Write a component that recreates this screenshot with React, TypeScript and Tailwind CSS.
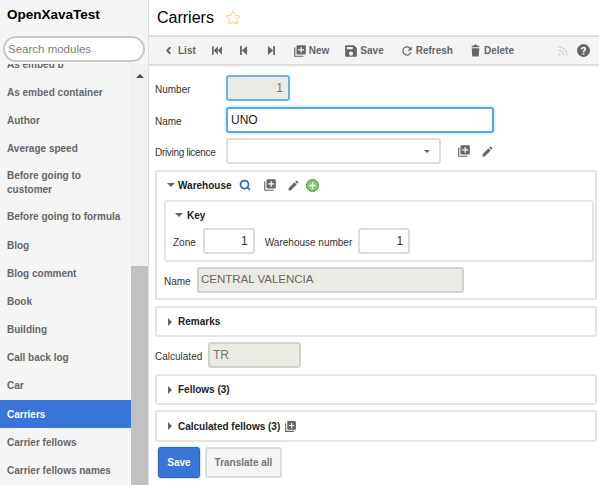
import { ChevronLeft, Plus, Rss, Search, Star } from 'lucide-react'
import type { ReactNode } from 'react'

const modules = [
  'As embed b',
  'As embed container',
  'Author',
  'Average speed',
  'Before going to customer',
  'Before going to formula',
  'Blog',
  'Blog comment',
  'Book',
  'Building',
  'Call back log',
  'Car',
  'Carriers',
  'Carrier fellows',
  'Carrier fellows names',
]

function Sidebar() {
  return (
    <aside className="flex w-[149px] shrink-0 flex-col overflow-hidden border-r border-[#e0e0e0] bg-[#f5f5f5]">
      <h1 className="pl-[7px] pt-[6px] text-[13.5px] font-bold leading-[18px] text-black">OpenXavaTest</h1>
      <input
        readOnly
        placeholder="Search modules"
        className="mx-[3px] mt-[12px] h-[26px] w-[142px] shrink-0 rounded-[13px] border-2 border-[#c8c8c8] bg-white pl-[3px] text-[11.5px] outline-none placeholder:text-[#808080]"
      />
      <div className="mt-[2px] flex min-h-0 flex-1">
        <div className="min-w-0 flex-1 overflow-hidden">
          <ul className="-mt-[14px] text-[10px] font-bold text-[#666]">
            {modules.map((name) => (
              <li
                key={name}
                className={
                  name === 'Carriers'
                    ? 'flex min-h-[28.2px] items-center bg-[#3875d7] px-[7px] text-white'
                    : name === 'Before going to customer'
                      ? 'flex min-h-[40px] items-center px-[7px] leading-[14px]'
                      : 'flex min-h-[28.2px] items-center px-[7px]'
                }
              >
                {name}
              </li>
            ))}
          </ul>
        </div>
        <div className="flex w-[17px] shrink-0 flex-col bg-[#f1f1f1]">
          <div className="flex h-[17px] items-center justify-center pt-[6px]">
            <div className="h-0 w-0 border-x-[4px] border-b-[4px] border-x-transparent border-b-[#505050]" />
          </div>
          <div className="mt-[185px] flex-1 bg-[#c1c1c1]" />
        </div>
      </div>
    </aside>
  )
}

function AddIcon({ className = 'h-[14px] w-[14px] text-[#666]' }: { className?: string }) {
  return (
    <svg viewBox="0 0 24 24" className={className} fill="currentColor">
      <path d="M4 6H2v16h16v-2H4V6z" />
      <path d="M20 2H8a2 2 0 0 0-2 2v12a2 2 0 0 0 2 2h12a2 2 0 0 0 2-2V4a2 2 0 0 0-2-2zm-1 9h-4v4h-2v-4H9V9h4V5h2v4h4v2z" />
    </svg>
  )
}

function PencilIcon() {
  return (
    <svg viewBox="0 0 24 24" className="h-[13px] w-[13px] text-[#666]" fill="currentColor">
      <path d="M3 17.25V21h3.75L17.81 9.94l-3.75-3.75L3 17.25zM20.71 7.04a1 1 0 0 0 0-1.41l-2.34-2.34a1 1 0 0 0-1.41 0l-1.83 1.83 3.75 3.75 1.83-1.83z" />
    </svg>
  )
}

function FirstIcon() {
  return (
    <svg viewBox="0 0 12 10" className="h-[9px] w-[10px] text-[#666]" fill="currentColor">
      <path d="M0 0h2v10H0zM7 0v10L2 5zM12 0v10L7 5z" />
    </svg>
  )
}

function PrevIcon() {
  return (
    <svg viewBox="0 0 9 10" className="h-[9px] w-[8px] text-[#666]" fill="currentColor">
      <path d="M0 0h2v10H0zM8 0v10L2 5z" />
    </svg>
  )
}

function NextIcon() {
  return (
    <svg viewBox="0 0 9 10" className="h-[9px] w-[8px] text-[#666]" fill="currentColor">
      <path d="M7 0h2v10H7zM1 0v10l6-5z" />
    </svg>
  )
}

function SaveIcon() {
  return (
    <svg viewBox="0 0 24 24" className="h-[14px] w-[14px] text-[#666]" fill="currentColor">
      <path d="M17 2H4a2 2 0 0 0-2 2v16a2 2 0 0 0 2 2h16a2 2 0 0 0 2-2V7l-5-5zm-5 18a3.500 3.500 0 1 1 0-7 3.500 3.500 0 0 1 0 7zm3-11H5V5h10v4z" />
    </svg>
  )
}

function RefreshIcon() {
  return (
    <svg viewBox="0 0 24 24" className="h-[14px] w-[14px] text-[#666]" fill="currentColor">
      <path d="M17.65 6.35A8 8 0 1 0 19.73 14h-2.08A6 6 0 1 1 12 6c1.66 0 3.14.69 4.22 1.78L13 11h7V4l-2.35 2.35z" />
    </svg>
  )
}

function TrashIcon() {
  return (
    <svg viewBox="0 0 24 24" className="h-[15px] w-[13px] text-[#666]" fill="currentColor">
      <path d="M5 8h14l-1 15H6L5 8zM19 3h-4l-1-2h-4L9 3H5v3h14V3z" />
    </svg>
  )
}

function HelpIcon() {
  return (
    <svg viewBox="0 0 24 24" className="h-[13px] w-[13px] text-[#666]" fill="currentColor">
      <path d="M12 0a12 12 0 1 0 0 24 12 12 0 0 0 0-24zm1.600 20h-3.200v-3h3.200v3zm2.600-8.300c-.9 1.100-2.600 1.700-2.600 3.600h-3.200c0-3.200 2.700-3.600 3.200-5 .3-1-.5-2-1.700-2-1.100 0-1.900.7-2.100 1.900L6.900 9.600C7.300 6.800 9.400 5 12 5c3.800 0 6.100 3.600 4.200 6.700z" />
    </svg>
  )
}

function ToolbarButton({ icon, label, className }: { icon: ReactNode; label: string; className: string }) {
  return (
    <span className={`flex items-center gap-[2px] ${className}`}>
      {icon}
      <span>{label}</span>
    </span>
  )
}

function Toolbar() {
  return (
    <div className="flex h-[31px] items-center border-y-2 border-[#dcdcdc] bg-[#f4f4f4] pl-[14px] text-[10px] font-bold text-[#666]">
      <span className="flex items-center gap-[4px]">
        <ChevronLeft size={11} strokeWidth={4} />
        <span>List</span>
      </span>
      <span className="ml-[16px]"><FirstIcon /></span>
      <span className="ml-[18px]"><PrevIcon /></span>
      <span className="ml-[19px]"><NextIcon /></span>
      <ToolbarButton icon={<AddIcon />} label="New" className="ml-[18px]" />
      <ToolbarButton icon={<SaveIcon />} label="Save" className="ml-[15px]" />
      <ToolbarButton icon={<RefreshIcon />} label="Refresh" className="ml-[16px]" />
      <ToolbarButton icon={<TrashIcon />} label="Delete" className="ml-[16px]" />
      <Rss size={12} strokeWidth={3} className="ml-[43px] text-[#d6d6d6]" />
      <span className="ml-[8px]"><HelpIcon /></span>
    </div>
  )
}

function Caret({ open }: { open?: boolean }) {
  return open ? (
    <span className="h-0 w-0 border-x-[4px] border-t-[4px] border-x-transparent border-t-[#666]" />
  ) : (
    <span className="h-0 w-0 border-y-[4px] border-l-[4px] border-y-transparent border-l-[#666]" />
  )
}

function CollapsedFrame({ title, height, extra }: { title: string; height: string; extra?: ReactNode }) {
  return (
    <div className={`flex items-center gap-[6px] rounded-[3px] border-2 border-[#e4e4e4] pl-[11px] text-[10px] font-bold text-[#222] ${height}`}>
      <Caret />
      <span>{title}</span>
      {extra}
    </div>
  )
}

function Field({ value, className }: { value: string; className: string }) {
  return <div className={`flex items-center rounded-[3px] border-2 ${className}`}>{value}</div>
}

function Form() {
  return (
    <div className="pl-[6px] pr-[2px] text-[10px] text-[#333]">
      <div className="flex items-center pt-[9px]">
        <span className="w-[71px] pt-[2px]">Number</span>
        <Field value="1" className="h-[26px] w-[64px] justify-end border-[#66b3ee] bg-[#ebebe4] pr-[5px] text-[12px] text-[#777]" />
      </div>
      <div className="mt-[6px] flex items-center">
        <span className="w-[71px] pt-[2px]">Name</span>
        <Field value="UNO" className="h-[26px] w-[268px] border-[#55aaee] bg-white pl-[3px] text-[12px] text-[#222] shadow-[0_0_3px_#8ccbf5]" />
      </div>
      <div className="mt-[5px] flex items-center">
        <span className="w-[71px] pt-[2px] tracking-[-0.3px]">Driving licence</span>
        <div className="flex h-[26px] w-[215px] items-center justify-end rounded-[3px] border-2 border-[#dcdcdc] pr-[9px]">
          <span className="h-0 w-0 border-x-[3px] border-t-[3px] border-x-transparent border-t-[#666]" />
        </div>
        <span className="ml-[16px]"><AddIcon /></span>
        <span className="ml-[10px]"><PencilIcon /></span>
      </div>

      <div className="mt-[6px] rounded-[3px] border-2 border-[#e4e4e4] pb-[5px] pl-[7px] pr-[1px] pt-[4px]">
        <div className="flex h-[18px] items-center pl-[3px] font-bold text-[#222]">
          <Caret open />
          <span className="ml-[3px]">Warehouse</span>
          <Search size={12} strokeWidth={3.5} className="ml-[7px] text-[#2b6fc4]" />
          <span className="ml-[12px]"><AddIcon /></span>
          <span className="ml-[10px]"><PencilIcon /></span>
          <span className="ml-[6px] flex h-[13px] w-[13px] items-center justify-center rounded-full border border-[#4f9a45] bg-[#82c874]">
            <Plus size={9} strokeWidth={4} className="text-white" />
          </span>
        </div>
        <div className="mt-[6px] rounded-[3px] border-2 border-[#e4e4e4] pb-[6px] pl-[7px] pt-[5px]">
          <div className="flex h-[16px] items-center pl-[2px] font-bold text-[#222]">
            <Caret open />
            <span className="ml-[4px]">Key</span>
          </div>
          <div className="mt-[5px] flex items-center">
            <span className="pt-[2px]">Zone</span>
            <Field value="1" className="ml-[7px] h-[26px] w-[52px] justify-end border-[#dcdcdc] pr-[5px] text-[12px] text-[#333]" />
            <span className="ml-[10px] pt-[2px]">Warehouse number</span>
            <Field value="1" className="ml-[6px] h-[26px] w-[52px] justify-end border-[#dcdcdc] pr-[5px] text-[12px] text-[#333]" />
          </div>
        </div>
        <div className="mt-[5px] flex items-center">
          <span className="w-[33px] pt-[2px]">Name</span>
          <Field value="CENTRAL VALENCIA" className="h-[26px] w-[267px] border-[#d2d2d2] bg-[#ebebe4] pl-[2px] text-[11.5px] text-[#666]" />
        </div>
      </div>

      <div className="mt-[6px]">
        <CollapsedFrame title="Remarks" height="h-[31px]" />
      </div>
      <div className="mt-[5px] flex items-center">
        <span className="w-[53px] pt-[2px]">Calculated</span>
        <Field value="TR" className="h-[26px] w-[93px] border-[#d2d2d2] bg-[#ebebe4] pl-[3px] text-[12px] text-[#777]" />
      </div>
      <div className="mt-[6px]">
        <CollapsedFrame title="Fellows (3)" height="h-[31px]" />
      </div>
      <div className="mt-[5px]">
        <CollapsedFrame
          title="Calculated fellows (3)"
          height="h-[32px]"
          extra={<span className="-ml-[2px]"><AddIcon className="h-[13px] w-[13px] text-[#666]" /></span>}
        />
      </div>
      <div className="mt-[5px] flex pl-[3px]">
        <span className="flex h-[31px] w-[42px] items-center justify-center rounded-[3px] border border-[#2f66bb] bg-[#3875d7] font-bold text-white shadow-[0_0_2px_#7aa7ee]">
          Save
        </span>
        <span className="ml-[5px] flex h-[31px] w-[77px] items-center justify-center rounded-[3px] border-2 border-[#dcdcdc] bg-[#f4f4f4] font-bold text-[#777]">
          Translate all
        </span>
      </div>
    </div>
  )
}

export default function App() {
  return (
    <div className="flex h-[485px] w-[599px] overflow-hidden bg-white font-['Liberation_Sans',Arial,sans-serif]">
      <Sidebar />
      <main className="min-w-0 flex-1">
        <div className="flex h-[35px] items-center pl-[8px]">
          <span className="text-[16px] text-black">Carriers</span>
          <Star size={16} strokeWidth={1.5} className="ml-[11px] text-[#efcf6a]" />
        </div>
        <Toolbar />
        <Form />
      </main>
    </div>
  )
}
